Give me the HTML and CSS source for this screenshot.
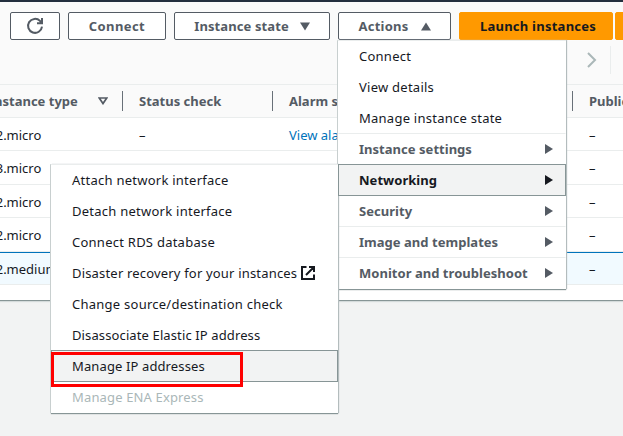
FILE: index.html
```html
<!DOCTYPE html>
<html lang="en">
<head>
<meta charset="utf-8">
<title>Instances</title>
<link rel="stylesheet" href="styles.css">
</head>
<body>
<main class="panel">
  <header class="toolbar">
    <button class="btn refresh" aria-label="Refresh"><svg width="18" height="18" viewBox="0 0 18 18" fill="none" stroke="currentColor" stroke-width="2"><path d="M16 9.6a7 7 0 1 1-2-5.7l1.2 1.6M16 1v5.2h-5"/></svg></button>
    <button class="btn connect">Connect</button>
    <button class="btn state">Instance state <svg width="10" height="9" viewBox="0 0 10 9"><path d="M0 .5h10L5 8.5z" fill="currentColor"/></svg></button>
    <button class="btn actions">Actions <svg width="10" height="9" viewBox="0 0 10 9"><path d="M0 8.5h10L5 .5z" fill="currentColor"/></svg></button>
    <button class="btn primary">Launch instances</button>
    <button class="btn primary split" aria-label="More"></button>
  </header>
  <div class="pager"><svg width="10" height="16" viewBox="0 0 10 16" fill="none" stroke="#aab7b8" stroke-width="2"><path d="M1 1l7 7-7 7"/></svg></div>
  <section class="table">
    <div class="row head">
      <div class="cell">Instance type <svg width="10" height="8" viewBox="0 0 10 8"><path d="M1.2 1h7.6L5 6.6z" fill="none" stroke="currentColor" stroke-width="1.7"/></svg></div>
      <div class="cell">Status check</div><div class="cell">Alarm status</div><div class="cell">Public</div>
    </div>
    <div class="row r1"><div class="cell">t2.micro</div><div class="cell">–</div><div class="cell link">View alarms</div><div class="cell">–</div></div>
    <div class="row r2"><div class="cell">t3.micro</div><div class="cell"></div><div class="cell link">View alarms</div><div class="cell">–</div></div>
    <div class="row r3"><div class="cell">t2.micro</div><div class="cell"></div><div class="cell"></div><div class="cell">–</div></div>
    <div class="row r4"><div class="cell">t2.micro</div><div class="cell"></div><div class="cell"></div><div class="cell">–</div></div>
    <div class="row selected"><div class="cell">t2.medium</div><div class="cell"></div><div class="cell"></div><div class="cell">–</div></div>
  </section>
</main>

<ul class="menu main-menu">
  <li>Connect</li>
  <li>View details</li>
  <li>Manage instance state</li>
  <li class="group">Instance settings<i class="arrow"></i></li>
  <li class="group active">Networking<i class="arrow"></i></li>
  <li class="group">Security<i class="arrow"></i></li>
  <li class="group">Image and templates<i class="arrow"></i></li>
  <li class="group">Monitor and troubleshoot<i class="arrow"></i></li>
</ul>

<ul class="menu sub-menu">
  <li>Attach network interface</li>
  <li>Detach network interface</li>
  <li>Connect RDS database</li>
  <li class="external">Disaster recovery for your instances <svg class="ext" width="14" height="14" viewBox="0 0 14 14" fill="none" stroke="currentColor" stroke-width="2"><path d="M5.5 1H1v12h12V8.5M8 1h5v5M13 1L5 9"/></svg></li>
  <li>Change source/destination check</li>
  <li class="tight">Disassociate Elastic IP address</li>
  <li class="active tight">Manage IP addresses</li>
  <li class="disabled">Manage ENA Express</li>
</ul>
<div class="callout"></div>
</body>
</html>
```
FILE: styles.css
```css
* { box-sizing: border-box; }
body {
  margin: 0;
  width: 623px;
  height: 436px;
  overflow: hidden;
  background: #f2f3f3;
  color: #16191f;
  font: 13px/18px "Noto Sans", "Open Sans", sans-serif;
}
.panel {
  height: 301px;
  overflow: hidden;
  background: linear-gradient(#fafafa 84px, #fff 84px);
  border-top: 2px solid #232f3e;
  border-bottom: 1px solid #879596;
  box-shadow: 0 1px 1px #d5dbdb;
}
.toolbar {
  display: flex;
  gap: 8px;
  height: 38px;
  padding: 10px 0 0 10px;
}
.btn {
  display: flex;
  flex: none;
  align-items: center;
  justify-content: center;
  height: 28px;
  padding: 0;
  border: 1px solid #545b64;
  border-radius: 2px;
  background: #fff;
  color: #545b64;
  font: 700 13px/18px "Noto Sans", sans-serif;
  letter-spacing: .25px;
  white-space: nowrap;
}
.refresh { width: 50px; }
.connect { width: 98px; letter-spacing: .4px; }
.state { width: 156px; gap: 11px; letter-spacing: .1px; }
.actions { width: 113px; gap: 11px; }
.actions svg { margin-left: 1px; }
.primary {
  width: 154px;
  padding-left: 4px;
  border-color: #ff9900;
  background: #ff9900;
  color: #16191f;
}
.split { width: 30px; margin-left: -6px; }
.pager {
  display: flex;
  align-items: center;
  justify-content: flex-end;
  width: 611px;
  height: 28px;
  margin: 6px 0 0;
  padding-right: 13px;
  border-right: 1px solid #eaeded;
}
.table { margin: 10px 0 0 -27px; }
.row {
  display: grid;
  grid-template-columns: 150px 150px 300px 1fr;
  align-items: center;
  height: 34px;
  border-bottom: 1px solid #eaeded;
}
.cell { padding-left: 16px; white-space: nowrap; }
.head {
  border-top: 1px solid #eaeded;
  background: #fafafa;
  color: #545b64;
  font-weight: 700;
}
.head .cell {
  display: flex;
  align-items: center;
  justify-content: space-between;
  height: 20px;
  padding-right: 14px;
  border-right: 1px solid #687078;
}
.head .cell:last-child { border: 0; }
.row .cell:first-child { padding-left: 18px; }
.head .cell:first-child { padding-left: 16px; }
.r1, .r3 { height: 33px; }
.r1, .r2 { padding-top: 1px; }
.r3, .r4 { padding-top: 1px; }
.selected {
  height: 33px;
  border-top: 1px solid #0073bb;
  background: #f1faff;
}
.link { color: #0073bb; }
.r2 .link { padding-top: 1px; }
.menu {
  position: absolute;
  margin: 0;
  padding: 0;
  list-style: none;
  height: 249px;
  background: #fff;
  border-top: 1px solid #eaeded;
  box-shadow: 0 1px 1px #879596, 1px 0 1px #bcc5c6, -1px 0 0 #d5dbdb;
}
.menu li {
  display: flex;
  align-items: center;
  height: 31px;
  padding-left: 20px;
  border: 1px solid transparent;
  white-space: nowrap;
  letter-spacing: .25px;
}
.menu li:first-child { margin-top: -1px; }
.main-menu { left: 338px; top: 40px; width: 228px; }
.sub-menu { left: 51px; top: 164px; width: 287px; }
.menu .external { letter-spacing: .18px; }
.menu .tight { letter-spacing: .12px; }
.menu .group {
  position: relative;
  justify-content: space-between;
  padding-right: 12px;
  border-top-color: #eaeded;
  color: #545b64;
  font-weight: 700;
  letter-spacing: .03px;
}
.arrow {
  border-left: 8px solid currentColor;
  border-top: 5px solid transparent;
  border-bottom: 5px solid transparent;
}
.menu li.active {
  height: 32px;
  margin-bottom: -1px;
  border-color: #879596;
  background: #f2f3f3;
  color: #16191f;
  z-index: 1;
}
.menu .disabled { color: #aab7b8; letter-spacing: .15px; }
.ext { margin-left: 4px; }
.callout {
  position: absolute;
  left: 51px;
  top: 352px;
  width: 192px;
  height: 35px;
  border: 3px solid #f00;
}
```
